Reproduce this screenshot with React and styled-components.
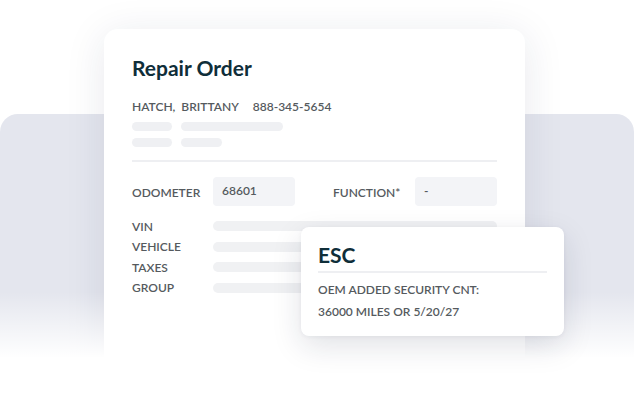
import React from 'react'
import styled, { createGlobalStyle } from 'styled-components'

const GlobalStyle = createGlobalStyle`
  html, body {
    margin: 0;
    padding: 0;
    background: #ffffff;
  }
  body {
    font-family: Lato, "Open Sans", "Liberation Sans", sans-serif;
    -webkit-font-smoothing: antialiased;
  }
`

const Stage = styled.div`
  position: relative;
  width: 634px;
  height: 400px;
  overflow: hidden;
  display: grid;
  grid-template-columns: 104px 421px 1fr;
  grid-template-rows: 29px 85px 1fr;
`

const Backdrop = styled.div`
  grid-column: 1 / 4;
  grid-row: 3 / 4;
  background: #e4e6ee;
  border-radius: 18px 18px 0 0;
`

const Card = styled.div`
  grid-column: 2 / 3;
  grid-row: 2 / 4;
  position: relative;
  background: #ffffff;
  border-radius: 14px 14px 0 0;
  box-shadow: 0 6px 40px rgba(30, 40, 80, 0.1);
  padding: 26px 28px 0;
  display: flex;
  flex-direction: column;
`

const Fade = styled.div`
  position: absolute;
  left: 0;
  right: 0;
  top: 292px;
  bottom: 0;
  z-index: 2;
  background: linear-gradient(to bottom, rgba(255, 255, 255, 0) 0, #ffffff 66px);
  pointer-events: none;
`

const Title = styled.h1`
  margin: 0;
  font-size: 21px;
  line-height: 26px;
  font-weight: 700;
  color: #0f2e39;
`

const Contact = styled.div`
  margin-top: 18px;
  display: flex;
  gap: 14px;
  font-size: 12px;
  line-height: 16px;
  font-weight: 600;
  color: #555a5e;
`

const Name = styled.span`
  white-space: pre;
`

const SkeletonRow = styled.div`
  display: flex;
  gap: 9px;
  margin-top: ${p => p.top || 7}px;
`

const Bar = styled.div`
  width: ${p => p.w}px;
  height: 9px;
  border-radius: 5px;
  background: #eff0f3;
`

const Rule = styled.div`
  margin-top: 13px;
  height: 2px;
  background: #eeeff2;
`

const FieldRow = styled.div`
  margin-top: 15px;
  display: grid;
  grid-template-columns: 81px 82px 38px 82px 82px;
  align-items: center;
`

const Label = styled.span`
  font-size: 12px;
  font-weight: 600;
  color: #555a5e;
  padding-top: ${p => (p.flush ? 0 : 2)}px;
  grid-column: ${p => p.col || 'auto'};
`

const Input = styled.div`
  height: 29px;
  box-sizing: border-box;
  padding: 6px 9px 0;
  background: #f3f4f7;
  border-radius: 4px;
  font-size: 12px;
  font-weight: 600;
  color: #555a5e;
`

const InfoList = styled.div`
  margin-top: 10px;
  display: grid;
  grid-template-columns: 81px 1fr;
  grid-auto-rows: 20.5px;
  align-items: center;
`

const LongBar = styled.div`
  height: 10px;
  border-radius: 5px;
  background: #f0f1f3;
`

const Popover = styled.div`
  position: absolute;
  left: 197px;
  top: 198px;
  width: 263px;
  height: 109px;
  box-sizing: border-box;
  padding: 15px 17px 0;
  background: #ffffff;
  border-radius: 8px;
  box-shadow: 0 10px 30px rgba(20, 30, 60, 0.13), 0 1px 4px rgba(20, 30, 60, 0.05);
  z-index: 3;
`

const PopTitle = styled.div`
  font-size: 21px;
  line-height: 26px;
  font-weight: 700;
  color: #0f2e39;
  padding-bottom: 3px;
  border-bottom: 2px solid #eeeff2;
`

const PopLine = styled.div`
  margin-top: ${p => p.top}px;
  font-size: 12px;
  line-height: 15px;
  font-weight: 600;
  color: #555a5e;
`

const infoRows = ['VIN', 'VEHICLE', 'TAXES', 'GROUP']

export default function App() {
  return (
    <Stage>
      <GlobalStyle />
      <Backdrop />
      <Card>
        <Title>Repair Order</Title>
        <Contact>
          <Name>HATCH,  BRITTANY</Name>
          <span>888-345-5654</span>
        </Contact>
        <SkeletonRow top={7}>
          <Bar w={40} />
          <Bar w={102} />
        </SkeletonRow>
        <SkeletonRow>
          <Bar w={40} />
          <Bar w={41} />
        </SkeletonRow>
        <Rule />
        <FieldRow>
          <Label>ODOMETER</Label>
          <Input>68601</Input>
          <Label col="4">FUNCTION*</Label>
          <Input>-</Input>
        </FieldRow>
        <InfoList>
          {infoRows.map(r => (
            <React.Fragment key={r}>
              <Label flush>{r}</Label>
              <LongBar />
            </React.Fragment>
          ))}
        </InfoList>
        <Popover>
          <PopTitle>ESC</PopTitle>
          <PopLine top={9}>OEM ADDED SECURITY CNT:</PopLine>
          <PopLine top={7}>36000 MILES OR 5/20/27</PopLine>
        </Popover>
      </Card>
      <Fade />
    </Stage>
  )
}
